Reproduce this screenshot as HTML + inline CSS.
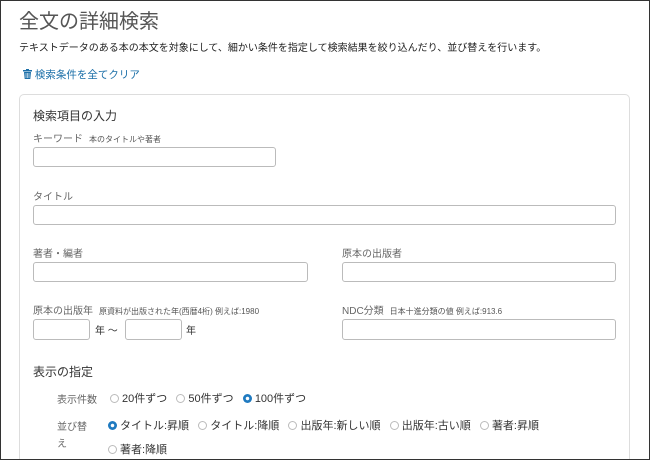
<!DOCTYPE html>
<html><head><meta charset="utf-8"><style>
*{box-sizing:border-box;margin:0;padding:0}
html,body{width:650px;height:460px;overflow:hidden}
body{background:#fff;font-family:"Liberation Sans","Noto Sans CJK JP",sans-serif;color:#333;position:relative}
.frame{position:absolute;left:0;top:0;width:650px;height:460px;border:1px solid #333;pointer-events:none}
.a{position:absolute;white-space:nowrap}
.in{position:absolute;border:1px solid #bbb;border-radius:3px;background:#fff}
.lbl{font-size:10px;color:#666}
.sm{font-size:8px;color:#555;margin-left:6px}
.card{position:absolute;left:19px;top:94px;width:611px;height:366px;border:1px solid #ddd;border-bottom:none;border-radius:5px 5px 0 0}
.r{display:inline-block;width:9px;height:9px;border:1px solid #bbb;border-radius:50%;vertical-align:-1px;margin-right:3px}
.r.on{border:none;background:radial-gradient(circle,#fff 0 1.5px,#1f7ac0 2px)}
.rad{font-size:11px;color:#333}
</style></head><body>
<div class="a" style="left:19px;top:5px;font-size:20px;color:#555">全文の詳細検索</div>
<div class="a" style="left:19px;top:39px;font-size:10px;color:#222">テキストデータのある本の本文を対象にして、細かい条件を指定して検索結果を絞り込んだり、並び替えを行います。</div>
<div class="a" style="left:23px;top:67px;font-size:10.5px;color:#1b6fa8"><svg width="9" height="10" viewBox="0 0 9 10" style="vertical-align:-1px"><rect x="0" y="1" width="9" height="1.5" fill="#1b6fa8"/><rect x="3" y="0" width="3" height="1" fill="#1b6fa8"/><path d="M1 3h7l-.7 7H1.7z" fill="#1b6fa8"/><path d="M3 4v5M4.5 4v5M6 4v5" stroke="#fff" stroke-width=".6"/></svg> 検索条件を全てクリア</div>
<div class="card"></div>
<div class="a" style="left:33px;top:107px;font-size:12px;color:#333">検索項目の入力</div>
<div class="a lbl" style="left:33px;top:130px">キーワード<span class="sm">本のタイトルや著者</span></div>
<div class="in" style="left:33px;top:147px;width:243px;height:20px"></div>
<div class="a lbl" style="left:33px;top:188px">タイトル</div>
<div class="in" style="left:33px;top:205px;width:583px;height:20px"></div>
<div class="a lbl" style="left:33px;top:245px">著者・編者</div>
<div class="in" style="left:33px;top:262px;width:275px;height:20px"></div>
<div class="a lbl" style="left:342px;top:245px">原本の出版者</div>
<div class="in" style="left:342px;top:262px;width:274px;height:20px"></div>
<div class="a lbl" style="left:33px;top:302px">原本の出版年<span class="sm">原資料が出版された年(西暦4桁) 例えば:1980</span></div>
<div class="in" style="left:33px;top:319px;width:57px;height:21px"></div>
<div class="a" style="left:95px;top:322px;font-size:10px">年 ～</div>
<div class="in" style="left:125px;top:319px;width:57px;height:21px"></div>
<div class="a" style="left:186px;top:322px;font-size:10px">年</div>
<div class="a lbl" style="left:342px;top:302px">NDC分類<span class="sm">日本十進分類の値 例えば:913.6</span></div>
<div class="in" style="left:342px;top:319px;width:274px;height:21px"></div>
<div class="a" style="left:33px;top:363px;font-size:12px;color:#333">表示の指定</div>
<div class="a lbl" style="left:57px;top:391px">表示件数</div>
<div class="a rad" style="left:110px;top:390px"><span class="r"></span>20件ずつ &nbsp; <span class="r"></span>50件ずつ &nbsp; <span class="r on"></span>100件ずつ</div>
<div class="a lbl" style="left:57px;top:418px">並び替</div>
<div class="a lbl" style="left:57px;top:435px">え</div>
<div class="a rad" style="left:108px;top:417px"><span class="r on"></span>タイトル:昇順 &nbsp; <span class="r"></span>タイトル:降順 &nbsp; <span class="r"></span>出版年:新しい順 &nbsp; <span class="r"></span>出版年:古い順 &nbsp; <span class="r"></span>著者:昇順</div>
<div class="a rad" style="left:108px;top:441px"><span class="r"></span>著者:降順</div>
<div class="frame"></div>
</body></html>
